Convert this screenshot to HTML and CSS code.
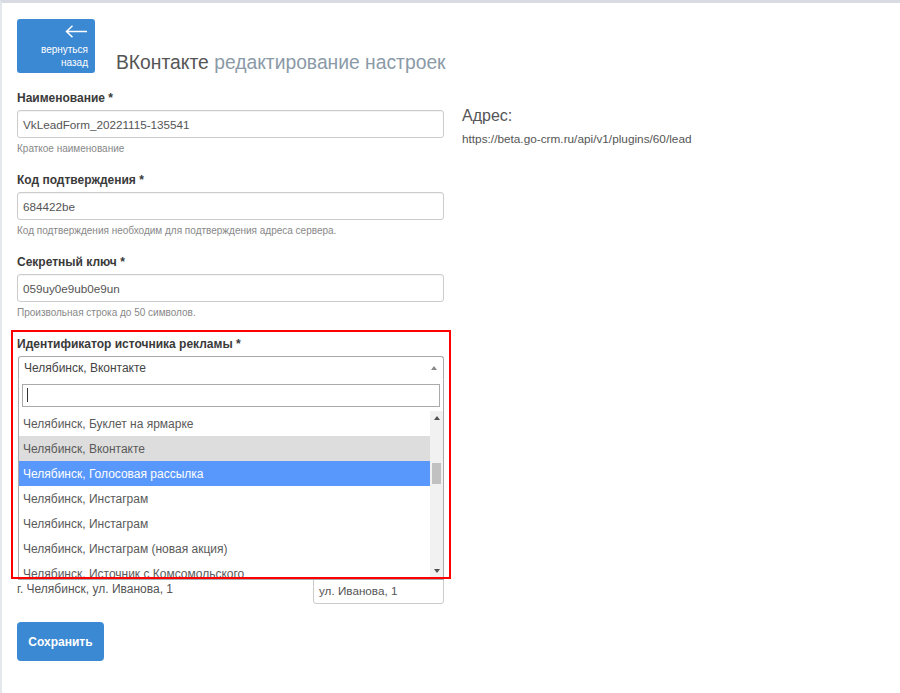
FILE: index.html
```html
<!DOCTYPE html>
<html lang="ru">
  <head>
    <meta charset="UTF-8" />
    <meta name="viewport" content="width=device-width, initial-scale=1.0" />
    <title>ВКонтакте — редактирование настроек</title>
    <link rel="stylesheet" href="styles.css">
  </head>
  <body>
    <div class="page">
      <div class="page-head">
        <a class="btn-back" href="#">
          <svg class="btn-back__arrow" width="23" height="13" viewBox="0 0 23 13">
            <path d="M22 6.5H1.5M7.5 0.8L1.5 6.5l6 5.7" fill="none" stroke="#fff" stroke-width="1.5" />
          </svg>
          <span>вернуться<br />назад</span>
        </a>
        <h1 class="page-title">ВКонтакте <small>редактирование настроек</small></h1>
      </div>

      <div class="layout">
        <form class="settings">
          <div class="field">
            <label>Наименование *</label>
            <input class="input" type="text" value="VkLeadForm_20221115-135541" />
            <p class="hint">Краткое наименование</p>
          </div>

          <div class="field">
            <label>Код подтверждения *</label>
            <input class="input" type="text" value="684422be" />
            <p class="hint">Код подтверждения необходим для подтверждения адреса сервера.</p>
          </div>

          <div class="field">
            <label>Секретный ключ *</label>
            <input class="input" type="text" value="059uy0e9ub0e9un" />
            <p class="hint">Произвольная строка до 50 символов.</p>
          </div>

          <div class="field field--select">
            <label>Идентификатор источника рекламы *</label>
            <div class="select">
              <span>Челябинск, Вконтакте</span>
              <i class="select__caret"></i>
            </div>

            <!-- открытый список select2 -->
            <div class="dropdown">
              <div class="dropdown__search"><input type="text" value="" /></div>
              <div class="dropdown__body">
                <ul class="dropdown__list">
                  <li>Челябинск, Буклет на ярмарке</li>
                  <li class="is-selected">Челябинск, Вконтакте</li>
                  <li class="is-hover">Челябинск, Голосовая рассылка</li>
                  <li>Челябинск, Инстаграм</li>
                  <li>Челябинск, Инстаграм</li>
                  <li>Челябинск, Инстаграм (новая акция)</li>
                  <li>Челябинск, Источник с Комсомольского</li>
                </ul>
                <div class="scrollbar">
                  <i class="scrollbar__up"></i>
                  <i class="scrollbar__thumb"></i>
                  <i class="scrollbar__down"></i>
                </div>
              </div>
            </div>
            <div class="mark"></div>
          </div>

          <div class="address-row">
            <span class="address-row__text">г. Челябинск, ул. Иванова, 1</span>
            <input class="input input--short" type="text" value="ул. Иванова, 1" />
          </div>

          <button class="btn-save" type="button">Сохранить</button>
        </form>

        <div class="info">
          <h3>Адрес:</h3>
          <p>https://beta.go-crm.ru/api/v1/plugins/60/lead</p>
        </div>
      </div>
    </div>
  </body>
</html>
```

FILE: styles.css
```css
body {
  margin: 0;
  background: #fff;
  font-family: "Liberation Sans", Arial, sans-serif;
  font-size: 12px;
  color: #555;
}
.page {
  min-height: 690px;
  border-top: 3px solid #d8dce2;
  border-left: 2px solid #e4e7ec;
  padding: 16px 15px 0;
}
.page-head {
  display: flex;
  align-items: flex-end;
  gap: 21px;
}
.btn-back {
  width: 78px;
  height: 54px;
  box-sizing: border-box;
  padding: 6px 7px 0 0;
  background: #3b89d2;
  border-radius: 3px;
  color: #fff;
  text-decoration: none;
  display: flex;
  flex-direction: column;
  align-items: flex-end;
  font-size: 10px;
  line-height: 13px;
  text-align: right;
}
.btn-back__arrow {
  margin-bottom: 5px;
}
.page-title {
  margin: 0 0 -2px;
  font-size: 19.3px;
  font-weight: normal;
  color: #555;
  line-height: 24px;
}
.page-title small {
  font-size: 19.3px;
  color: #8b9aa7;
}
.layout {
  display: flex;
  gap: 18px;
  margin-top: 18px;
}
.settings {
  width: 427px;
  margin: 0;
}
.field {
  margin-bottom: 18px;
}
.field label {
  display: block;
  font-weight: bold;
  color: #3a3a3a;
  line-height: 14px;
  margin-bottom: 5px;
}
.input {
  display: block;
  width: 100%;
  height: 28px;
  box-sizing: border-box;
  padding: 4px 5px;
  border: 1px solid #ccc;
  border-radius: 3px;
  font: inherit;
  font-size: 11.7px;
  color: #555;
  box-shadow: inset 0 1px 1px rgba(0, 0, 0, 0.05);
}
.hint {
  margin: 4px 0 0;
  font-size: 10px;
  line-height: 13px;
  color: #888;
}
.field--select {
  position: relative;
  margin-bottom: 0;
}
.select {
  height: 24px;
  box-sizing: border-box;
  margin-left: 1px;
  padding: 0 5px;
  border: 1px solid #aaa;
  border-bottom-color: transparent;
  border-radius: 3px 3px 0 0;
  display: flex;
  align-items: center;
  justify-content: space-between;
  color: #444;
}
.select__caret {
  width: 0;
  height: 0;
  border-left: 3px solid transparent;
  border-right: 3px solid transparent;
  border-bottom: 4px solid #888;
  margin-right: 1px;
}
/* список поверх остальной формы */
.dropdown {
  position: absolute;
  left: 1px;
  right: 0;
  top: 43px;
  z-index: 5;
  background: #fff;
  border: 1px solid #aaa;
  border-top: 0;
}
.dropdown__search {
  padding: 4px 3px;
  position: relative;
}
.dropdown__search input {
  display: block;
  width: 100%;
  height: 23px;
  box-sizing: border-box;
  border: 1px solid #aaa;
  padding: 0 4px;
  font: inherit;
}
/* мигающий курсор в поле поиска */
.dropdown__search::after {
  content: "";
  position: absolute;
  left: 8px;
  top: 8px;
  width: 1px;
  height: 14px;
  background: #333;
}
.dropdown__body {
  display: flex;
  height: 168px;
  overflow: hidden;
}
.dropdown__list {
  flex: 1;
  list-style: none;
  margin: 0;
  padding: 0;
}
.dropdown__list li {
  height: 25px;
  line-height: 26px;
  padding-left: 4px;
  white-space: nowrap;
  color: #5a5a5a;
}
.dropdown__list li.is-selected {
  background: #ddd;
}
.dropdown__list li.is-hover {
  background: #5897fb;
  color: #fff;
}
.scrollbar {
  width: 13px;
  background: #f1f1f1;
  display: flex;
  flex-direction: column;
  align-items: center;
  position: relative;
}
.scrollbar__up,
.scrollbar__down {
  width: 0;
  height: 0;
  border-left: 3px solid transparent;
  border-right: 3px solid transparent;
}
.scrollbar__up {
  margin-top: 5px;
  border-bottom: 4px solid #505050;
}
.scrollbar__thumb {
  width: 9px;
  height: 21px;
  margin-top: 43px;
  background: #c1c1c1;
}
.scrollbar__down {
  margin-top: auto;
  margin-bottom: 6px;
  border-top: 4px solid #505050;
}
/* красная рамка выделения */
.mark {
  position: absolute;
  left: -6px;
  top: -7px;
  width: 440px;
  height: 249px;
  box-sizing: border-box;
  border: 2px solid #f00;
  z-index: 6;
  pointer-events: none;
}
.address-row {
  display: flex;
  justify-content: space-between;
  align-items: flex-start;
  margin-top: 196px;
}
.address-row__text {
  font-size: 12px;
  line-height: 14px;
  margin-top: 6px;
}
.input--short {
  width: 131px;
}
.btn-save {
  margin-top: 18px;
  width: 87px;
  height: 39px;
  border: 0;
  border-radius: 4px;
  background: #3b89d2;
  color: #fff;
  font: inherit;
  font-size: 12px;
  font-weight: bold;
}
.info h3 {
  margin: 15px 0 0;
  font-size: 16px;
  font-weight: normal;
  color: #555;
  line-height: 20px;
}
.info p {
  margin: 6px 0 0;
  font-size: 11.8px;
  color: #555;
}
```
